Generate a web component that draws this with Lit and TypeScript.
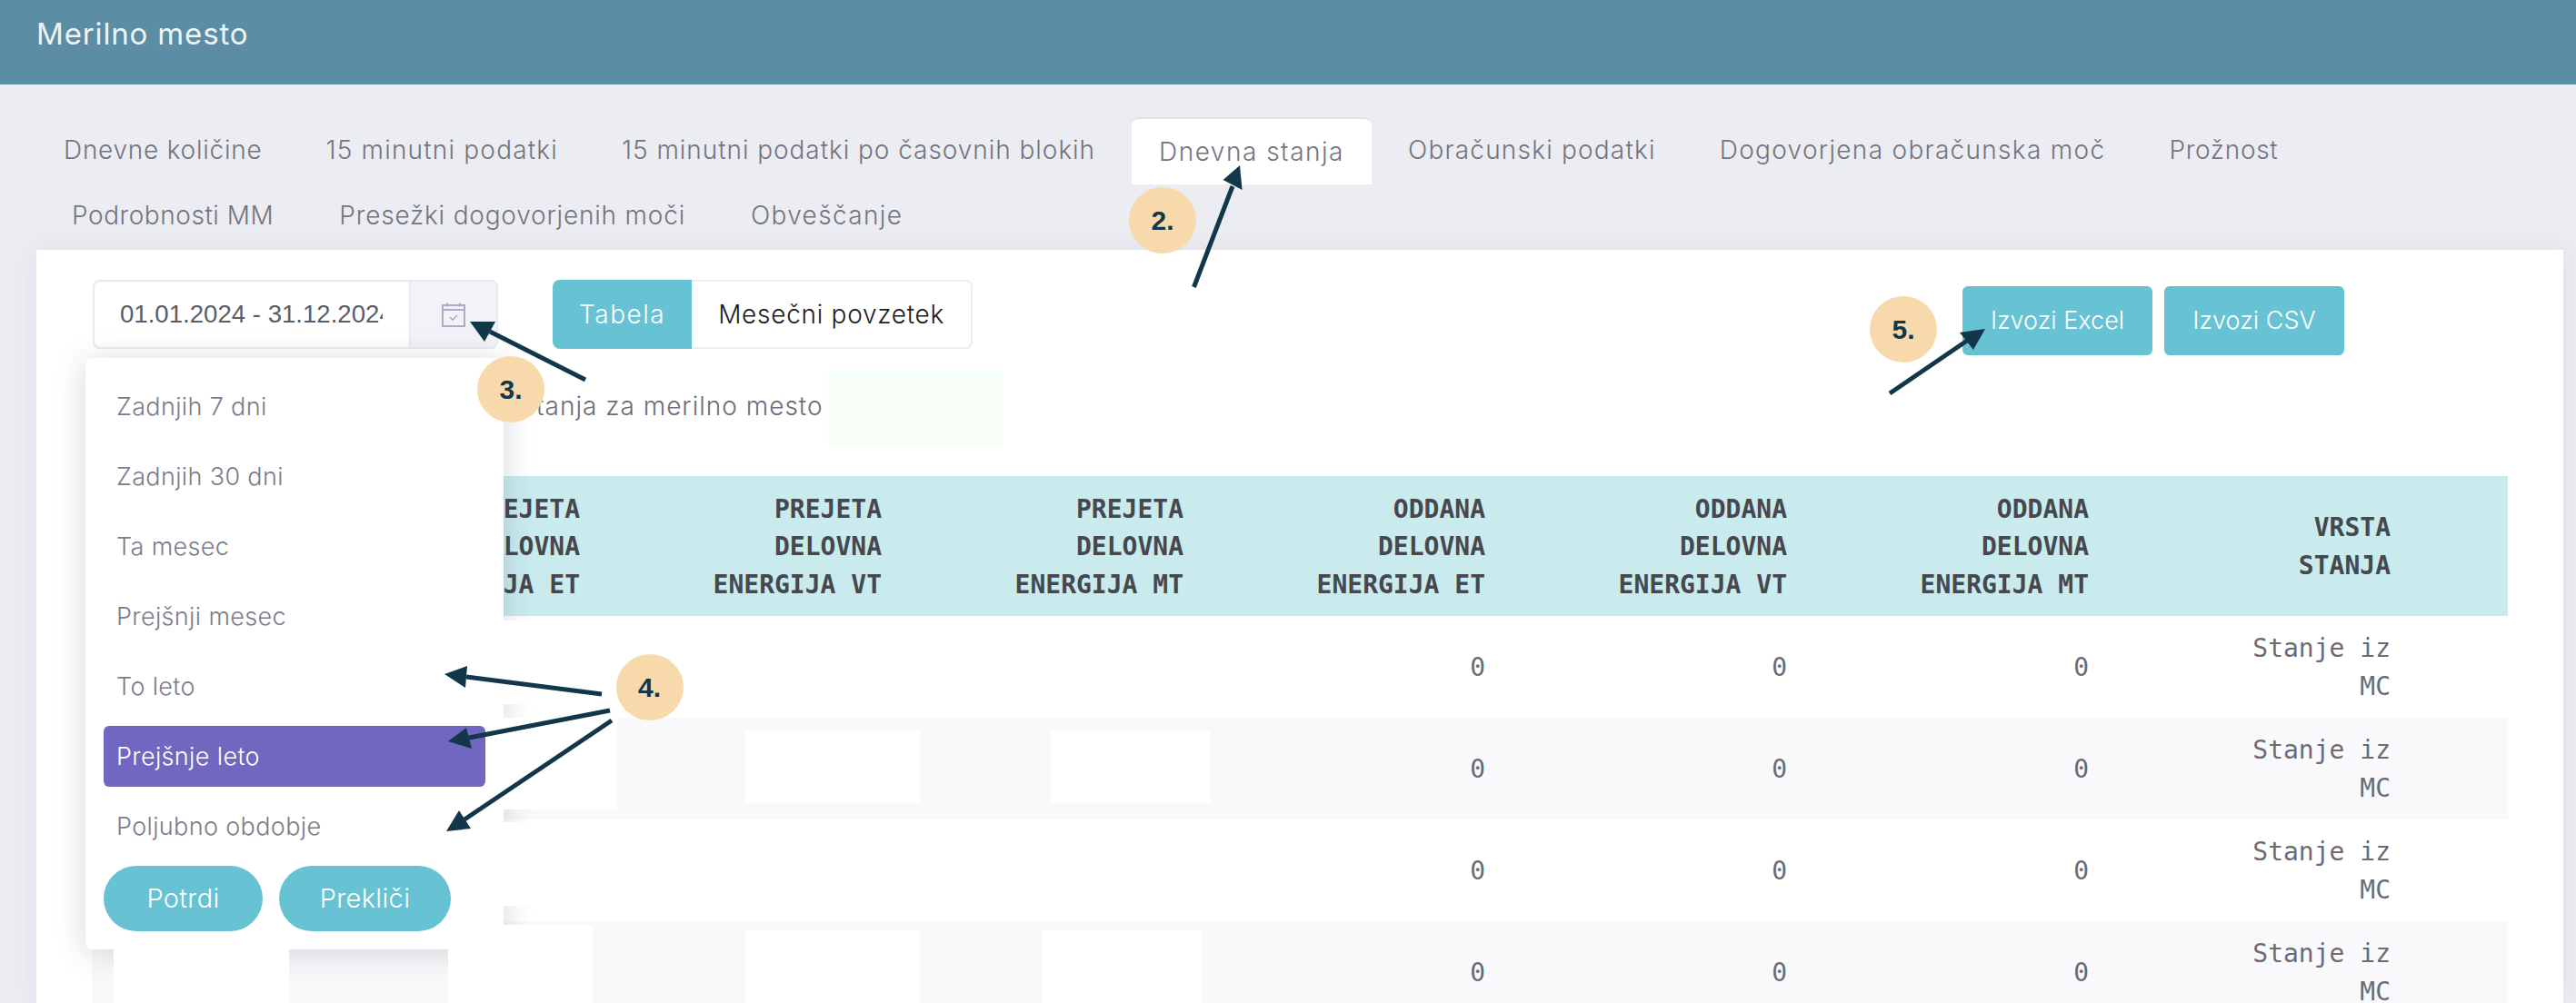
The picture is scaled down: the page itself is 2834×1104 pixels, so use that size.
import { LitElement, css, html, svg } from 'lit'
import { customElement } from 'lit/decorators.js'

// label + tracking, Inter needs a bit of help per label to keep the tab widths
const TABS_TOP: [string, number][] = [
  ['Dnevne količine', 0.75],
  ['15 minutni podatki', 1.2],
  ['15 minutni podatki po časovnih blokih', 0.95],
  ['Dnevna stanja', 1.5],
  ['Obračunski podatki', 1.2],
  ['Dogovorjena obračunska moč', 1.3],
  ['Prožnost', 0.7],
]
const TABS_BOTTOM: [string, number][] = [
  ['Podrobnosti MM', 0.55],
  ['Presežki dogovorjenih moči', 0.8],
  ['Obveščanje', 1.35],
]
const RANGES = ['Zadnjih 7 dni', 'Zadnjih 30 dni', 'Ta mesec', 'Prejšnji mesec', 'To leto', 'Prejšnje leto', 'Poljubno obdobje']
const COLUMNS = [
  ['PREJETA', 'DELOVNA', 'ENERGIJA ET'],
  ['PREJETA', 'DELOVNA', 'ENERGIJA VT'],
  ['PREJETA', 'DELOVNA', 'ENERGIJA MT'],
  ['ODDANA', 'DELOVNA', 'ENERGIJA ET'],
  ['ODDANA', 'DELOVNA', 'ENERGIJA VT'],
  ['ODDANA', 'DELOVNA', 'ENERGIJA MT'],
  ['VRSTA', 'STANJA'],
]

// white blocks that hide customer data, page coordinates: x, y, w, h
const HIDDEN = [
  [554, 683, 146, 92],
  [554, 790, 125, 101],
  [820, 805, 192, 79],
  [1156, 805, 175, 79],
  [554, 905, 146, 92],
  [125, 1045, 193, 59],
  [493, 1018, 159, 86],
  [820, 1024, 192, 80],
  [1147, 1024, 175, 80],
]

// annotation arrows: tail, tip, and the two back corners of the head
const ARROWS = [
  [1313.5, 316, 1356, 205, 1364, 182, 1345.6, 198, 1366.6, 209],
  [644, 418, 539, 365, 517, 354, 545, 354, 533, 376],
  [662, 764, 513, 745, 489, 742, 514, 733, 512, 757],
  [671, 782, 516, 812, 493, 816, 513, 801, 519, 824],
  [673, 793, 511, 902, 491, 915, 505, 892, 518, 912],
  [2079, 433, 2164, 375, 2184, 362, 2156, 366, 2171, 385],
]

const BADGES = [
  ['2.', 1279, 242],
  ['3.', 562, 428],
  ['4.', 714.5, 756],
  ['5.', 2094, 362],
]

@customElement('app-root')
export class AppRoot extends LitElement {
  private row() {
    return html`
      <div class="tr">
        <div></div><div></div><div></div>
        <div>0</div><div>0</div><div>0</div>
        <div>Stanje iz<br />MC</div>
      </div>
    `
  }

  private tab([label, tracking]: [string, number]) {
    const active = label === 'Dnevna stanja'
    return html`<div class="tab ${active ? 'active' : ''}" style="letter-spacing:${tracking}px">${label}</div>`
  }

  render() {
    return html`
      <div class="topbar">Merilno mesto</div>

      <div class="tabs first">${TABS_TOP.map((t) => this.tab(t))}</div>
      <div class="tabs second">${TABS_BOTTOM.map((t) => this.tab(t))}</div>

      <div class="card">
        <div class="toolbar">
          <div class="date">
            <div class="date-value"><span>01.01.2024 - 31.12.2024</span></div>
            <div class="date-icon">
              <svg width="26" height="27" viewBox="0 0 26 27" fill="none" stroke="#aeabc8" stroke-width="2">
                <rect x="1" y="3" width="24" height="23" />
                <path d="M1 8h24M6 0.5v4M20 0.5v4" />
                <path d="M9 16l3 3 5-5" stroke-width="1.6" />
              </svg>
            </div>
          </div>
          <div class="segment">
            <div class="seg on">Tabela</div>
            <div class="seg">Mesečni povzetek</div>
          </div>
          <div class="exports">
            <div class="export excel">Izvozi Excel</div>
            <div class="export csv">Izvozi CSV</div>
          </div>
        </div>

        <div class="subtitle">
          <span>Dnevna stanja za merilno mesto</span>
          <div class="meter"></div>
        </div>

        <div class="table">
          <div class="tr th">
            ${COLUMNS.map((c) => html`<div>${c.map((l, i) => html`${i ? html`<br />` : ''}${l}`)}</div>`)}
          </div>
          ${this.row()}${this.row()}${this.row()}${this.row()}
        </div>

        <div class="ranges">
          ${RANGES.map((r) => html`<div class="range ${r === 'Prejšnje leto' ? 'active' : ''}">${r}</div>`)}
          <div class="range-actions">
            <div class="pill ok">Potrdi</div>
            <div class="pill cancel">Prekliči</div>
          </div>
        </div>
      </div>

      ${HIDDEN.map(
        ([x, y, w, h]) => html`<div class="hidden" style="left:${x}px;top:${y}px;width:${w}px;height:${h}px"></div>`,
      )}

      <svg class="arrows" width="2834" height="1104" viewBox="0 0 2834 1104">
        ${ARROWS.map(
          ([x1, y1, x2, y2, tx, ty, ax, ay, bx, by]) => svg`
            <line x1=${x1} y1=${y1} x2=${x2} y2=${y2} stroke="#12364a" stroke-width="5" />
            <polygon points="${tx},${ty} ${ax},${ay} ${bx},${by}" fill="#12364a" />
          `,
        )}
      </svg>
      ${BADGES.map(
        ([t, x, y]) => html`<div class="badge" style="left:${(x as number) - 37}px;top:${(y as number) - 36.5}px">${t}</div>`,
      )}
    `
  }

  static styles = css`
    :host {
      display: block;
      position: relative;
      height: 1104px;
      overflow: hidden;
      background: #ecedf2;
      font-family: Inter, 'Open Sans', sans-serif;
      font-weight: 300;
    }
    .topbar {
      height: 93px;
      box-sizing: border-box;
      padding: 17px 0 0 40px;
      background: #5b8da5;
      color: #eef3f6;
      font-size: 33px;
      letter-spacing: 0.85px;
      line-height: 40px;
      font-weight: 400;
    }
    .tabs {
      display: flex;
      gap: 10px;
      font-size: 28px;
      color: #74747f;
    }
    .tabs.first {
      padding: 36px 0 0 40px;
    }
    .tabs.second {
      padding: 0 0 0 49px;
      gap: 12px;
    }
    .tab {
      height: 74px;
      line-height: 72px;
      padding: 0 30px;
      box-sizing: border-box;
      white-space: nowrap;
    }
    .tabs.second .tab {
      height: 72px;
      line-height: 69px;
    }
    .tab.active {
      background: #fff;
      border-top: 2px solid #e2e3e9;
      border-radius: 8px 8px 0 0;
    }
    .card {
      position: relative;
      height: 829px;
      margin: 0 14px 0 40px;
      background: #fff;
      box-shadow: 0 0 30px rgba(40, 40, 70, 0.07);
    }
    .toolbar {
      display: flex;
      align-items: flex-start;
      padding: 33px 241px 0 62px;
    }
    .date {
      display: flex;
      width: 446px;
      height: 76px;
      box-sizing: border-box;
      border: 2px solid #e9e9f2;
      border-radius: 8px;
      overflow: hidden;
    }
    .date-value {
      width: 291px;
      margin-left: 28px;
      overflow: hidden;
      white-space: nowrap;
      font: 400 27.6px/72px 'Liberation Sans', sans-serif;
      color: #5c5d66;
    }
    .date-icon {
      display: flex;
      align-items: center;
      justify-content: center;
      width: 94px;
      margin-left: 29px;
      background: #f2f3f8;
      border-left: 2px solid #e9e9f2;
    }
    .segment {
      display: flex;
      height: 76px;
      margin-left: 60px;
      box-sizing: border-box;
      border: 2px solid #ecedf2;
      border-left: 0;
      border-radius: 8px;
      font-size: 28px;
      letter-spacing: 0.72px;
      line-height: 72px;
      color: #1c1c20;
    }
    .seg {
      padding: 0 29px;
    }
    .seg.on {
      margin: -2px 0;
      line-height: 76px;
      letter-spacing: 1.5px;
      background: #67c2d3;
      color: #fff;
      border-radius: 8px 0 0 8px;
    }
    .exports {
      display: flex;
      gap: 13px;
      margin: 7px 0 0 auto;
    }
    .export {
      height: 76px;
      line-height: 76px;
      border-radius: 6px;
      background: #67c2d3;
      color: #fff;
      font-size: 27px;
      text-align: center;
      white-space: nowrap;
    }
    .excel {
      width: 209px;
    }
    .csv {
      width: 198px;
    }
    .subtitle {
      display: flex;
      gap: 5px;
      height: 83px;
      margin-top: 16px;
      padding-left: 420px;
      font-size: 28px;
      letter-spacing: 1px;
      line-height: 80px;
      color: #6c6d78;
    }
    .meter {
      width: 193px;
      background: #f8fff8;
    }
    .table {
      margin: 34px 61px 0 61px;
      font: 400 28px/41.6px 'DejaVu Sans Mono', monospace;
      color: #6a6b74;
    }
    .tr {
      display: grid;
      grid-template-columns: 557px repeat(6, 332px) 109px;
      align-items: center;
      height: 112px;
      box-sizing: border-box;
      padding-top: 2px;
      text-align: right;
    }
    .tr > div {
      padding-right: 20px;
    }
    .tr:nth-child(odd) {
      background: #f9f9fb;
    }
    .tr.th {
      height: 154px;
      background: #c9ebee;
      color: #46484e;
      font-weight: 700;
    }
    .ranges {
      position: absolute;
      left: 54px;
      top: 119px;
      width: 460px;
      height: 651px;
      box-sizing: border-box;
      padding: 20px;
      display: flex;
      flex-direction: column;
      gap: 10px;
      background: #fff;
      border-radius: 8px;
      box-shadow: 0 4px 34px rgba(40, 40, 70, 0.18);
      font-size: 27px;
      letter-spacing: 0.35px;
      color: #7b7c8a;
    }
    .range {
      height: 67px;
      line-height: 67px;
      padding-left: 14px;
      border-radius: 6px;
    }
    .range.active {
      background: #7068c0;
      color: #fff;
    }
    .range-actions {
      display: flex;
      gap: 18px;
    }
    .pill {
      height: 72px;
      line-height: 72px;
      border-radius: 36px;
      background: #67c2d3;
      color: #fff;
      text-align: center;
      font-size: 29px;
    }
    .ok {
      width: 175px;
    }
    .cancel {
      width: 189px;
    }
    .hidden {
      position: absolute;
      background: #fff;
    }
    .arrows {
      position: absolute;
      left: 0;
      top: 0;
      pointer-events: none;
    }
    .badge {
      position: absolute;
      width: 74px;
      height: 73px;
      border-radius: 50%;
      background: #f8d9ab;
      color: #12364a;
      font: 700 30px/73px 'Liberation Sans', sans-serif;
      letter-spacing: 0;
      text-align: center;
    }
  `
}
